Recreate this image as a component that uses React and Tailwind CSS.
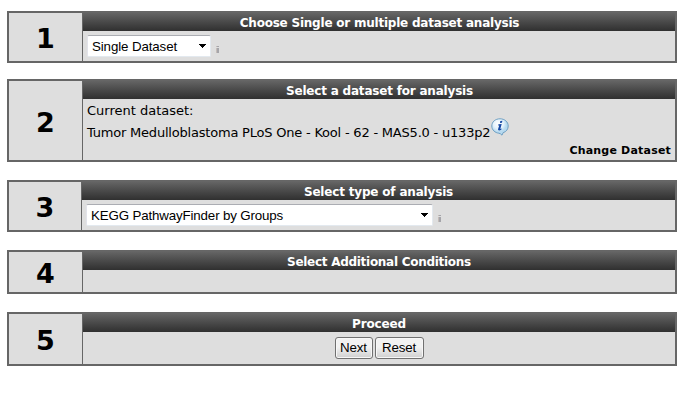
import React from "react";

function Step({ number, title, titleClass = "", className = "", numberWidth = "w-[74px]", children }) {
  return (
    <section className={`flex w-[670px] border-2 border-[#666] bg-[#dedede] ${className}`}>
      <div className={`flex shrink-0 items-center justify-center border-r border-[#666] pt-[3px] text-[27px] leading-none font-bold ${numberWidth}`}>
        <span>{number}</span>
      </div>
      <div className="flex min-w-0 flex-1 flex-col">
        <h2 className="flex h-[18px] shrink-0 items-center justify-center bg-linear-to-b from-[#646464] to-[#303030] pt-0.5 text-[12px] leading-[18px] font-bold whitespace-nowrap text-white">
          <span className={titleClass}>{title}</span>
        </h2>
        {children}
      </div>
    </section>
  );
}

function SelectBox({ label, labelClass = "", className = "" }) {
  return (
    <button className={`flex h-[22px] items-center justify-between rounded-[2px] border border-t-[#abadb3] border-r-[#e3e9ef] border-b-[#e3e9ef] border-l-[#e2e3ea] bg-white pr-[3px] pl-1 font-['Liberation_Sans',Arial,sans-serif] text-[13.33px] leading-none whitespace-nowrap ${className}`}>
      <span className={`pt-px ${labelClass}`}>{label}</span>
      <svg width="8" height="4" viewBox="0 0 8 4" shapeRendering="crispEdges">
        <path d="M0 0H7V1H6V2H5V3H4V4H3V3H2V2H1V1H0Z" />
      </svg>
    </button>
  );
}

function Hint() {
  return (
    <svg className="mt-[11px] ml-[5px]" width="3" height="7" viewBox="0 0 3 7" shapeRendering="crispEdges">
      <path d="M0 0H3V1H0ZM0 2H3V7H0Z" fill="#c4bcb8" />
      <path d="M1 0H3V1H1ZM1 2H3V7H1Z" fill="#a5a5aa" />
    </svg>
  );
}

function InfoIcon() {
  return (
    <svg className="mb-[7px] ml-px shrink-0" width="18" height="18" viewBox="0 0 18 18">
      <defs>
        <radialGradient id="bubble" cx="40%" cy="30%">
          <stop offset="0" stopColor="#fff" />
          <stop offset="0.6" stopColor="#e5f3fc" />
          <stop offset="1" stopColor="#b6d9ef" />
        </radialGradient>
      </defs>
      <path d="M9 .8C4.3.8.8 3.9.8 8c0 4 3.3 6.800 7 7.200 1.300.2 2.400.9 3.200 2l1.100-2.500C15.400 13.700 17.200 11.100 17.200 8 17.200 3.900 13.700.8 9 .8Z" fill="url(#bubble)" stroke="#6f9fc2" />
      <path d="m9.300 3 2.100-.3-.4 2-2.100.2ZM7.400 6.300l3.300-.4-1.400 5.200 1.300-.5-.3 1.200c-1.900 1.200-3.600 1-3.200-.7l1.100-3.700-1.100.1Z" fill="#1749a5" />
    </svg>
  );
}

function FormButton({ label, className }) {
  return (
    <button className={`flex h-[22px] items-center justify-center rounded-[3px] border border-[#707070] bg-linear-to-b from-[#f2f2f2] from-45% to-[#cfcfcf] font-['Liberation_Sans',Arial,sans-serif] text-[13.33px] leading-none tracking-[-0.15px] shadow-[inset_0_0_0_1px_#f7f7f7] ${className}`}>
      {label}
    </button>
  );
}

export default function App() {
  return (
    <main className="h-[409px] w-[679px] overflow-hidden bg-white pt-[11px] pl-[7px] font-['DejaVu_Sans',Verdana,sans-serif] text-black">
      <Step number="1" title="Choose Single or multiple dataset analysis" titleClass="pl-px tracking-[-0.22px]" className="mb-4 h-[52px]">
        <div className="flex items-start pt-1 pl-1">
          <SelectBox label="Single Dataset" labelClass="tracking-[-0.12px]" className="w-[124px]" />
          <Hint />
        </div>
      </Step>
      <Step number="2" title="Select a dataset for analysis" titleClass="pl-px tracking-[-0.2px]" className="mb-[18px] h-[83px]">
        <div className="flex flex-1 flex-col pl-1 text-[13px] whitespace-nowrap">
          <p className="h-[19px] pt-[4px] leading-4">Current dataset:</p>
          <div className="flex h-[25px] items-end">
            <p className="leading-[20px] tracking-[-0.205px]">Tumor Medulloblastoma PLoS One - Kool - 62 - MAS5.0 - u133p2</p>
            <InfoIcon />
          </div>
          <p className="pr-1 text-right text-[11px] leading-[16px] font-bold tracking-[0.2px]">Change Dataset</p>
        </div>
      </Step>
      <Step number="3" title="Select type of analysis" titleClass="tracking-[-0.18px]" className="mb-[18px] h-[52px]" numberWidth="w-[73px]">
        <div className="flex items-start pt-1 pl-1">
          <SelectBox label="KEGG PathwayFinder by Groups" labelClass="tracking-[-0.15px]" className="w-[347px]" />
          <Hint />
        </div>
      </Step>
      <Step number="4" title="Select Additional Conditions" titleClass="tracking-[-0.28px]" className="mb-[18px] h-[44px]" />
      <Step number="5" title="Proceed" titleClass="tracking-[-0.15px]" className="h-[54px]">
        <div className="flex justify-center gap-[2px] pt-[5px]">
          <FormButton label="Next" className="w-[38px]" />
          <FormButton label="Reset" className="w-[49px]" />
        </div>
      </Step>
    </main>
  );
}
